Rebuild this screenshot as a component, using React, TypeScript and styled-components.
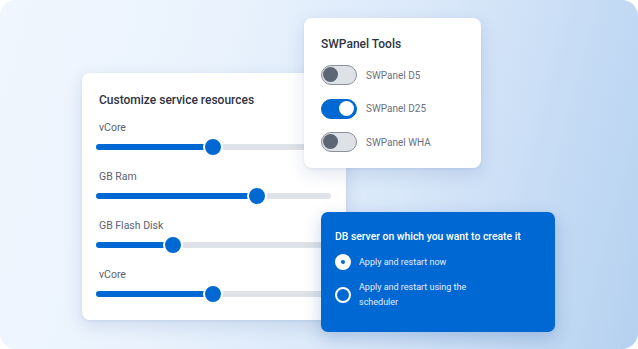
import React from "react";
import styled, { createGlobalStyle } from "styled-components";

const Global = createGlobalStyle`
  html, body { margin: 0; padding: 0; background: #ffffff; }
  body { font-family: Roboto, "Noto Sans", Arial, sans-serif; -webkit-font-smoothing: antialiased; }
`;

const Canvas = styled.div`
  position: relative;
  width: 638px;
  height: 349px;
  border-radius: 16px;
  overflow: hidden;
  background: linear-gradient(105deg, #f0f6fe 0%, #eaf3fd 30%, #d8e7f9 62%, #b5d1f0 100%);
`;

const Card = styled.div<{ $x: number; $y: number; $w: number; $h: number }>`
  position: absolute;
  left: ${(p) => p.$x}px;
  top: ${(p) => p.$y}px;
  width: ${(p) => p.$w}px;
  height: ${(p) => p.$h}px;
  box-sizing: border-box;
  border-radius: 8px;
  background: #ffffff;
  box-shadow: 0 6px 18px rgba(40, 80, 140, 0.14), 0 1px 3px rgba(40, 80, 140, 0.08);
  display: flex;
  flex-direction: column;
`;

const ResourcesCard = styled(Card)`
  padding: 19px 15px 16px 14px;
  z-index: 1;
`;

const ToolsCard = styled(Card)`
  padding: 18px 17px 16px 17px;
  z-index: 2;
`;

const DbCard = styled(Card)`
  background: #0068d3;
  border-radius: 7px;
  padding: 18px 14px 0 14px;
  z-index: 3;
  box-shadow: 0 6px 18px rgba(0, 60, 140, 0.22);
`;

const Title = styled.div`
  font-size: 12px;
  line-height: 16px;
  font-weight: 500;
  color: #2e3440;
`;

const ResTitle = styled(Title)`
  margin-left: 3px;
`;

const SliderGroup = styled.div`
  display: flex;
  flex-direction: column;
  gap: 2px;
  margin-top: 13px;
`;

const SliderLabel = styled.div`
  margin-left: 3px;
  font-size: 10.5px;
  line-height: 14px;
  color: #5a6371;
`;

const SliderTrack = styled.div`
  position: relative;
  height: 20px;
  display: flex;
  align-items: center;
`;

const TrackBase = styled.div`
  width: 100%;
  height: 6px;
  border-radius: 3px;
  background: #dfe2e6;
  position: relative;
`;

const TrackFill = styled.div`
  position: absolute;
  left: 0;
  top: 0;
  height: 6px;
  border-radius: 3px;
  background: #0068d3;
`;

const Thumb = styled.div`
  position: absolute;
  top: 0;
  width: 16px;
  height: 16px;
  border-radius: 50%;
  background: #0068d3;
  border: 2px solid #ffffff;
  transform: translateX(-10px);
`;

const Slider = ({ label, value }: { label: string; value: number }) => (
  <SliderGroup>
    <SliderLabel>{label}</SliderLabel>
    <SliderTrack>
      <TrackBase>
        <TrackFill style={{ width: `${value * 100}%` }} />
      </TrackBase>
      <Thumb style={{ left: `${value * 100}%` }} />
    </SliderTrack>
  </SliderGroup>
);

const ToggleList = styled.div`
  display: flex;
  flex-direction: column;
  gap: 13.5px;
  margin-top: 13px;
`;

const ToggleRow = styled.div`
  display: flex;
  align-items: center;
  gap: 9px;
`;

const Switch = styled.div<{ $on: boolean }>`
  position: relative;
  box-sizing: border-box;
  width: 36px;
  height: 20px;
  border-radius: 10px;
  background: ${(p) => (p.$on ? "#0068d3" : "#dee1e5")};
  border: 1.5px solid ${(p) => (p.$on ? "#0068d3" : "#8a919b")};
`;

const Knob = styled.div<{ $on: boolean }>`
  position: absolute;
  top: 1px;
  left: ${(p) => (p.$on ? "17px" : "1px")};
  width: 15px;
  height: 15px;
  border-radius: 50%;
  background: ${(p) => (p.$on ? "#ffffff" : "#5d6674")};
`;

const ToggleLabel = styled.span`
  font-size: 10px;
  color: #6b7280;
`;

const Toggle = ({ label, on }: { label: string; on: boolean }) => (
  <ToggleRow>
    <Switch $on={on}>
      <Knob $on={on} />
    </Switch>
    <ToggleLabel>{label}</ToggleLabel>
  </ToggleRow>
);

const DbTitle = styled.div`
  font-size: 10.4px;
  line-height: 14px;
  font-weight: 500;
  color: #ffffff;
`;

const RadioList = styled.div`
  display: flex;
  flex-direction: column;
  gap: 10px;
  margin-top: 10px;
`;

const RadioRow = styled.div`
  display: flex;
  align-items: center;
  gap: 8px;
`;

const RadioDot = styled.div<{ $checked: boolean }>`
  box-sizing: border-box;
  width: 16px;
  height: 16px;
  flex: none;
  border-radius: 50%;
  border: 2px solid #ffffff;
  background: ${(p) => (p.$checked ? "#ffffff" : "transparent")};
  display: flex;
  align-items: center;
  justify-content: center;
  &::after {
    content: "";
    display: ${(p) => (p.$checked ? "block" : "none")};
    width: 4px;
    height: 4px;
    border-radius: 50%;
    background: #0068d3;
  }
`;

const RadioText = styled.span`
  max-width: 120px;
  font-size: 9px;
  line-height: 15px;
  color: #e4eeff;
`;

const Radio = ({ label, checked }: { label: string; checked: boolean }) => (
  <RadioRow>
    <RadioDot $checked={checked} />
    <RadioText>{label}</RadioText>
  </RadioRow>
);

export default function App() {
  return (
    <>
      <Global />
      <Canvas>
        <ResourcesCard $x={82} $y={73} $w={264} $h={247}>
          <ResTitle>Customize service resources</ResTitle>
          <Slider label="vCore" value={0.496} />
          <Slider label="GB Ram" value={0.685} />
          <Slider label="GB Flash Disk" value={0.328} />
          <Slider label="vCore" value={0.496} />
        </ResourcesCard>
        <ToolsCard $x={304} $y={18} $w={177} $h={150}>
          <Title>SWPanel Tools</Title>
          <ToggleList>
            <Toggle label="SWPanel D5" on={false} />
            <Toggle label="SWPanel D25" on={true} />
            <Toggle label="SWPanel WHA" on={false} />
          </ToggleList>
        </ToolsCard>
        <DbCard $x={321} $y={212} $w={234} $h={120}>
          <DbTitle>DB server on which you want to create it</DbTitle>
          <RadioList>
            <Radio label="Apply and restart now" checked={true} />
            <Radio label="Apply and restart using the scheduler" checked={false} />
          </RadioList>
        </DbCard>
      </Canvas>
    </>
  );
}
